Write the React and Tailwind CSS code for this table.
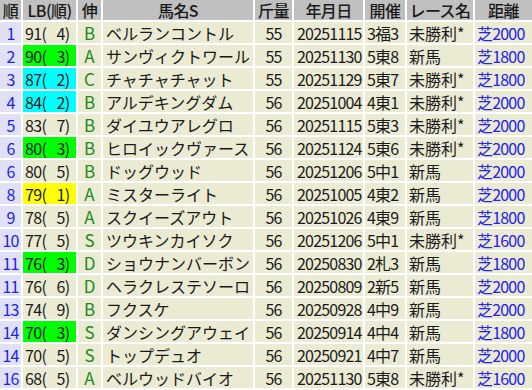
import React from "react";

const rows = [
  ["1", "91( 4)", "", "B", "ベルランコントル", "55", "20251115", "3福3", "未勝利*", "芝2000"],
  ["2", "90( 3)", "green", "A", "サンヴィクトワール", "55", "20251130", "5東8", "新馬", "芝1800"],
  ["3", "87( 2)", "cyan", "C", "チャチャチャット", "55", "20251129", "5東7", "未勝利*", "芝1800"],
  ["4", "84( 2)", "cyan", "B", "アルデキングダム", "56", "20251004", "4東1", "未勝利*", "芝2000"],
  ["5", "83( 7)", "", "B", "ダイユウアレグロ", "56", "20251115", "5東3", "未勝利*", "芝2000"],
  ["6", "80( 3)", "green", "B", "ヒロイックヴァース", "56", "20251124", "5東6", "未勝利*", "芝2000"],
  ["6", "80( 5)", "", "B", "ドッグウッド", "56", "20251206", "5中1", "新馬", "芝2000"],
  ["8", "79( 1)", "yellow", "A", "ミスターライト", "56", "20251005", "4東2", "新馬", "芝2000"],
  ["9", "78( 5)", "", "A", "スクイーズアウト", "56", "20251026", "4東9", "新馬", "芝1800"],
  ["10", "77( 5)", "", "S", "ツウキンカイソク", "56", "20251206", "5中1", "未勝利*", "芝1600"],
  ["11", "76( 3)", "green", "D", "ショウナンバーボン", "56", "20250830", "2札3", "新馬", "芝1800"],
  ["11", "76( 6)", "", "D", "ヘラクレステソーロ", "56", "20250809", "2新5", "新馬", "芝2000"],
  ["13", "74( 9)", "", "B", "フクスケ", "56", "20250928", "4中9", "新馬", "芝2000"],
  ["14", "70( 3)", "green", "S", "ダンシングアウェイ", "56", "20250914", "4中4", "新馬", "芝1800"],
  ["14", "70( 5)", "", "S", "トップデュオ", "56", "20250921", "4中7", "新馬", "芝2000"],
  ["16", "68( 5)", "", "A", "ベルウッドバイオ", "56", "20251130", "5東8", "未勝利*", "芝1600"],
];

const headers = ["順", "LB(順)", "伸", "馬名S", "斤量", "年月日", "開催", "レース名", "距離"];

// highlight colours for the LB cell
const lbBg = {
  "": "bg-[#ebead3]",
  green: "bg-[#00ff00]",
  cyan: "bg-[#00ffff]",
  yellow: "bg-[#ffff00]",
};

// "91( 4)" -> keep the padded space as wide as a digit
const LB = ({ text }) => {
  const [a, b] = text.split(" ");
  return (
    <>
      {a}
      <span className="inline-block w-[10px]" />
      {b}
    </>
  );
};

const cell = "h-[21px] flex items-center leading-none whitespace-nowrap";

export default function App() {
  return (
    <div
      className="w-[532px] h-[390px] bg-white text-[16px] text-[#1a1a1a] overflow-hidden"
      style={{ fontFamily: '"Noto Sans CJK JP", "Noto Sans", sans-serif' }}
    >
      <div className="grid grid-cols-[21px_53px_23px_150px_37px_69px_40px_66px_57px] gap-[2px]">
        {headers.map((h) => (
          <div
            key={h}
            className="h-[20px] flex items-center justify-center leading-none bg-[#c0c0c0] font-medium whitespace-nowrap tracking-[-0.6px]"
          >
            {h}
          </div>
        ))}
        {rows.map((r, i) => (
          <React.Fragment key={i}>
            <div className={`${cell} justify-center bg-[#e0e0f6] text-[#2323e6] tracking-[-0.8px]`}>
              {r[0]}
            </div>
            <div className={`${cell} pl-[2px] tracking-[-0.6px] ${lbBg[r[2]]}`}>
              <LB text={r[1]} />
            </div>
            <div className={`${cell} justify-center bg-[#ebead3] text-[#1b8a1b] text-[17px]`}>{r[3]}</div>
            <div className={`${cell} bg-[#ebead3] pl-[3px]`}>{r[4]}</div>
            <div className={`${cell} justify-center bg-[#ebead3] tracking-[-0.8px]`}>{r[5]}</div>
            <div className={`${cell} bg-[#ebead3] pl-[3px] tracking-[-0.8px]`}>{r[6]}</div>
            <div className={`${cell} bg-[#ebead3] pl-[2px] tracking-[-0.8px]`}>{r[7]}</div>
            <div className={`${cell} bg-[#ebead3] pl-[2px]`}>{r[8]}</div>
            <div className={`${cell} bg-[#ebead3] text-[#2323ee] pl-[2px] tracking-[-0.8px]`}>
              {r[9]}
            </div>
          </React.Fragment>
        ))}
      </div>
    </div>
  );
}
